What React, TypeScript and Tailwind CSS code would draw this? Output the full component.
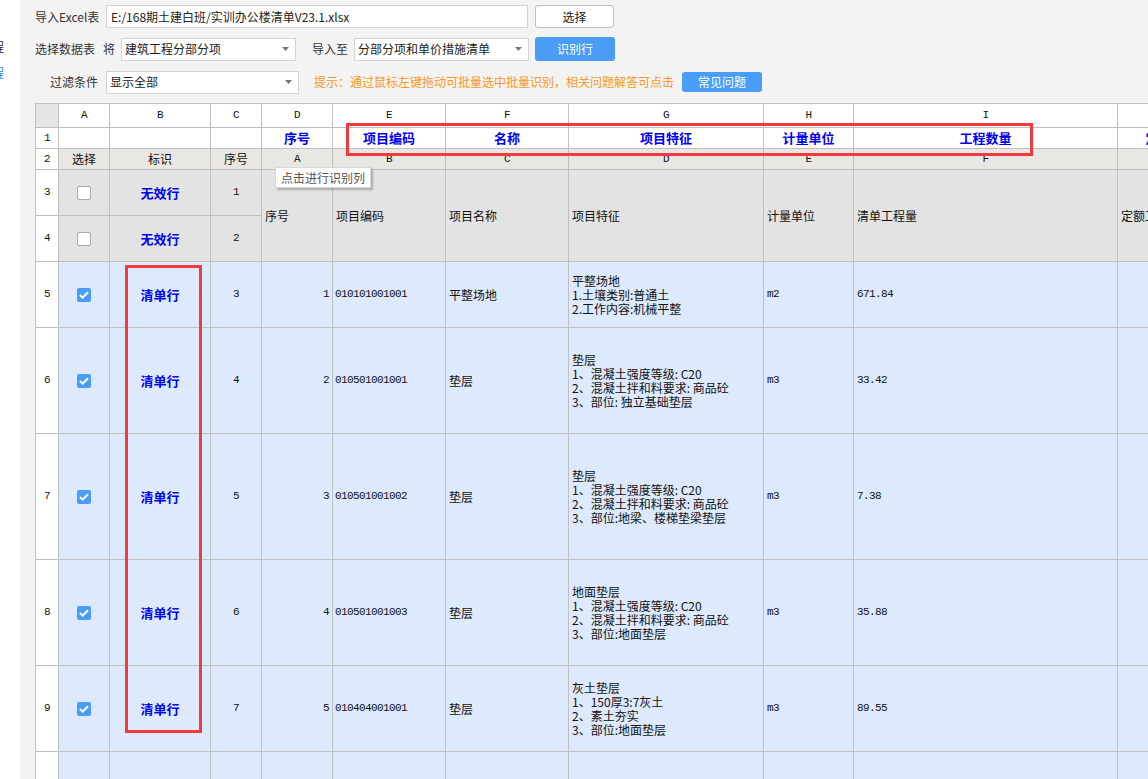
import React from 'react';

type Row = {
  n: number;
  seq: number;
  no: number;
  code: string;
  name: string;
  feat: string[];
  unit: string;
  qty: string;
};

const rows: Row[] = [
  { n: 5, seq: 3, no: 1, code: '010101001001', name: '平整场地', feat: ['平整场地', '1.土壤类别:普通土', '2.工作内容:机械平整'], unit: 'm2', qty: '671.84' },
  { n: 6, seq: 4, no: 2, code: '010501001001', name: '垫层', feat: ['垫层', '1、混凝土强度等级: C20', '2、混凝土拌和料要求: 商品砼', '3、部位: 独立基础垫层'], unit: 'm3', qty: '33.42' },
  { n: 7, seq: 5, no: 3, code: '010501001002', name: '垫层', feat: ['垫层', '1、混凝土强度等级: C20', '2、混凝土拌和料要求: 商品砼', '3、部位:地梁、楼梯垫梁垫层'], unit: 'm3', qty: '7.38' },
  { n: 8, seq: 6, no: 4, code: '010501001003', name: '垫层', feat: ['地面垫层', '1、混凝土强度等级: C20', '2、混凝土拌和料要求: 商品砼', '3、部位:地面垫层'], unit: 'm3', qty: '35.88' },
  { n: 9, seq: 7, no: 5, code: '010404001001', name: '垫层', feat: ['灰土垫层', '1、150厚3:7灰土', '2、素土夯实', '3、部位:地面垫层'], unit: 'm3', qty: '89.55' },
];

const mono = "font-['Liberation_Mono',monospace] text-[11px] tracking-[-0.6px] text-[#111]";
const cjk = "font-['Noto_Sans_CJK_SC',sans-serif]";
const blue = 'bg-[#dde9fc]';
const gray = 'bg-[#e3e3e3]';
const band = 'bg-[#e8e7e3]';

function Caret() {
  return (
    <svg width="7" height="4" viewBox="0 0 7 4" className="shrink-0">
      <path d="M0 0h7L3.5 4z" fill="#777" />
    </svg>
  );
}

function Select({ text, w }: { text: string; w: string }) {
  return (
    <div className={`${w} h-[23px] bg-white border border-[#d4d4d4] flex items-center pl-[3px] pr-[6px] text-[12px] text-[#222]`}>
      <span className="flex-1 truncate">{text}</span>
      <Caret />
    </div>
  );
}

function Check({ on }: { on: boolean }) {
  if (!on) return <div className="w-[14px] h-[14px] rounded-[2px] border border-[#a9a9a9] bg-white" />;
  return (
    <div className="w-[14px] h-[14px] rounded-[2px] bg-[#4a9df6] flex items-center justify-center">
      <svg width="10" height="8" viewBox="0 0 10 8">
        <path d="M1 4l2.6 2.6L9 1.2" stroke="white" strokeWidth="2" fill="none" />
      </svg>
    </div>
  );
}

function Toolbar() {
  return (
    <div className={`${cjk} text-[12px] text-[#333]`}>
      <div className="flex items-center h-[23px] mt-[5px]">
        <span className="w-[71px]">导入Excel表</span>
        <div className="w-[422px] h-[23px] bg-white border border-[#d4d4d4] flex items-center pl-[4px] text-[#222]">
          E:/168期土建白班/实训办公楼清单V23.1.xlsx
        </div>
        <button className="ml-[7px] w-[79px] h-[23px] bg-white border border-[#bdbdbd] rounded-[3px] text-[#222]">选择</button>
      </div>
      <div className="flex items-center h-[24px] mt-[9px]">
        <span>选择数据表</span>
        <span className="ml-[8px] mr-[6px]">将</span>
        <Select text="建筑工程分部分项" w="w-[175px]" />
        <span className="ml-[16px] mr-[6px]">导入至</span>
        <Select text="分部分项和单价措施清单" w="w-[175px]" />
        <button className="ml-[6px] w-[80px] h-[24px] bg-[#4a9df6] rounded-[3px] text-white">识别行</button>
      </div>
      <div className="flex items-center h-[24px] mt-[9px]">
        <span className="w-[71px] text-right pr-[8px]">过滤条件</span>
        <Select text="显示全部" w="w-[193px]" />
        <span className="ml-[15px] text-[#f59a23]">提示：通过鼠标左键拖动可批量选中批量识别，相关问题解答可点击</span>
        <button className="ml-[8px] w-[80px] h-[20px] bg-[#4a9df6] rounded-[3px] text-white">常见问题</button>
      </div>
    </div>
  );
}

function Sheet() {
  const letters = ['A', 'B', 'C', 'D', 'E', 'F', 'G', 'H', 'I', ''];
  const titles = ['序号', '项目编码', '名称', '项目特征', '计量单位', '工程数量', '定额工程量'];
  const heads = ['序号', '项目编码', '项目名称', '项目特征', '计量单位', '清单工程量', '定额工程量'];
  const cell = 'flex items-center overflow-hidden whitespace-nowrap';
  return (
    <div className={`${cjk} grid w-max gap-px p-px bg-[#bfbfbf] grid-cols-[22px_50px_100px_50px_70px_112px_122px_194px_89px_263px_120px] grid-rows-[23px_20px_20px_45px_45px_65px_105px_125px_105px_85px_60px] text-[12px] text-[#111]`}>
      {/* column letters */}
      <div className="bg-[#e6e6e6]" />
      {letters.map((l, i) => (
        <div key={'h' + i} className={`${cell} justify-center bg-white ${mono}`}>{l}</div>
      ))}

      {/* row 1: mapped titles */}
      <div className={`${cell} justify-center bg-white ${mono}`}>1</div>
      <div className="bg-white" />
      <div className="bg-white" />
      <div className="bg-white" />
      {titles.map((t, i) => (
        <div key={'t' + i} className={`${cell} justify-center bg-white text-[13px] font-bold text-[#0000f0]`}>{t}</div>
      ))}

      {/* row 2 */}
      <div className={`${cell} justify-center bg-white ${mono}`}>2</div>
      <div className={`${cell} justify-center ${band}`}>选择</div>
      <div className={`${cell} justify-center ${band}`}>标识</div>
      <div className={`${cell} justify-center ${band}`}>序号</div>
      {['A', 'B', 'C', 'D', 'E', 'F', ''].map((l, i) => (
        <div key={'b' + i} className={`${cell} justify-center ${band} ${mono}`}>{l}</div>
      ))}

      {/* rows 3-4 */}
      <div className={`${cell} justify-center bg-white ${mono}`}>3</div>
      <div className={`${cell} justify-center ${gray}`}><Check on={false} /></div>
      <div className={`${cell} justify-center ${gray} text-[13px] font-bold text-[#0000f0]`}>无效行</div>
      <div className={`${cell} justify-center ${gray} ${mono}`}>1</div>
      {heads.map((h, i) => (
        <div key={'c' + i} className={`${cell} row-span-2 ${gray} pl-[3px]`}>{h}</div>
      ))}
      <div className={`${cell} justify-center bg-white ${mono}`}>4</div>
      <div className={`${cell} justify-center ${gray}`}><Check on={false} /></div>
      <div className={`${cell} justify-center ${gray} text-[13px] font-bold text-[#0000f0]`}>无效行</div>
      <div className={`${cell} justify-center ${gray} ${mono}`}>2</div>

      {/* data rows */}
      {rows.map((r) => (
        <React.Fragment key={r.n}>
          <div className={`${cell} justify-center bg-white ${mono}`}>{r.n}</div>
          <div className={`${cell} justify-center ${blue}`}><Check on /></div>
          <div className={`${cell} justify-center ${blue} text-[13px] font-bold text-[#0000f0]`}>清单行</div>
          <div className={`${cell} justify-center ${blue} ${mono}`}>{r.seq}</div>
          <div className={`${cell} justify-end pr-[3px] ${blue} ${mono}`}>{r.no}</div>
          <div className={`${cell} pl-[2px] ${blue} ${mono}`}>{r.code}</div>
          <div className={`${cell} pl-[3px] ${blue}`}>{r.name}</div>
          <div className={`${cell} pl-[3px] ${blue}`}>
            <div className="leading-[14px]">
              {r.feat.map((f, i) => (
                <div key={i}>{f}</div>
              ))}
            </div>
          </div>
          <div className={`${cell} pl-[3px] ${blue} ${mono}`}>{r.unit}</div>
          <div className={`${cell} pl-[3px] ${blue} ${mono}`}>{r.qty}</div>
          <div className={blue} />
        </React.Fragment>
      ))}

      {/* row 10 */}
      <div className="bg-white" />
      {Array.from({ length: 10 }).map((_, i) => (
        <div key={'e' + i} className={blue} />
      ))}
    </div>
  );
}

export default function App() {
  return (
    <div className={`${cjk} relative w-[1148px] h-[779px] overflow-hidden flex bg-white`}>
      {/* clipped side menu */}
      <div className="w-[20px] shrink-0 overflow-hidden text-[12px]">
        <div className="mt-[38px] ml-[-8px] w-[40px] text-[#222]">程</div>
        <div className="mt-[8px] ml-[-8px] w-[40px] text-[#2f80ed]">程</div>
      </div>

      <div className="flex-1 bg-[#f3f3f3] pl-[15px] min-w-0">
        <Toolbar />
        <div className="mt-[9px]">
          <Sheet />
        </div>
      </div>

      {/* overlays */}
      <div className="absolute left-[275px] top-[167px] h-[21px] px-[5px] bg-white border border-[#d8d8d8] shadow-[2px_2px_2px_rgba(0,0,0,0.25)] flex items-center text-[12px] text-[#555]">
        点击进行识别列
      </div>
      <div className="absolute left-[346px] top-[123px] w-[687px] h-[33px] border-[3px] border-[#f23a3c]" />
      <div className="absolute left-[125px] top-[265px] w-[77px] h-[468px] border-[3px] border-[#f23a3c]" />
    </div>
  );
}
